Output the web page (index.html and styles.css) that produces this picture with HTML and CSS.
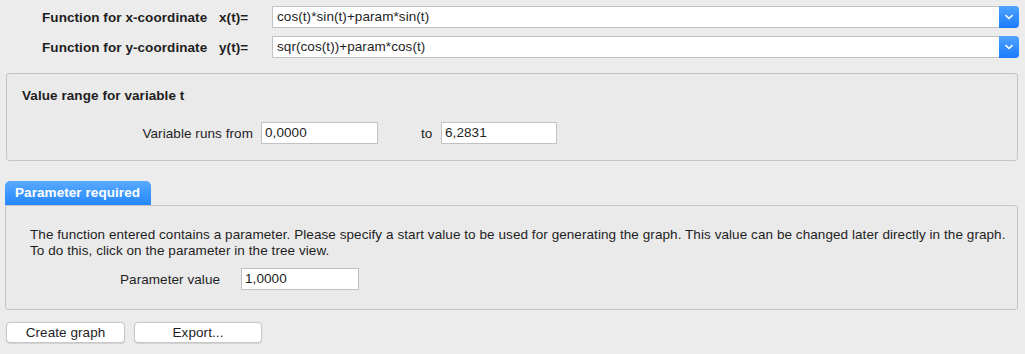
FILE: index.html
```html
<!DOCTYPE html>
<html>
<head><meta charset="utf-8"><link rel="stylesheet" href="styles.css"></head>
<body>
<div class="app">
  <div class="fnrow">
    <span class="fnlabel">Function for x-coordinate</span>
    <span class="fnvar">x(t)=</span>
    <div class="combo"><span class="combotext">cos(t)*sin(t)+param*sin(t)</span><span class="combobtn"><svg width="10" height="6" viewBox="0 0 10 6"><path d="M1.5 1.2 L5 4.5 L8.5 1.2" fill="none" stroke="#fff" stroke-width="1.6"/></svg></span></div>
  </div>
  <div class="fnrow">
    <span class="fnlabel">Function for y-coordinate</span>
    <span class="fnvar">y(t)=</span>
    <div class="combo"><span class="combotext">sqr(cos(t))+param*cos(t)</span><span class="combobtn"><svg width="10" height="6" viewBox="0 0 10 6"><path d="M1.5 1.2 L5 4.5 L8.5 1.2" fill="none" stroke="#fff" stroke-width="1.6"/></svg></span></div>
  </div>

  <div class="panel range">
    <div class="paneltitle">Value range for variable t</div>
    <div class="rangerow">
      <span class="lbl-from">Variable runs from</span>
      <div class="field f-from">0,0000</div>
      <span class="lbl-to">to</span>
      <div class="field f-to">6,2831</div>
    </div>
  </div>

  <div class="tabwrap">
    <div class="tab">Parameter required</div>
    <div class="panel param">
      <p class="desc"><span class="line">The function entered contains a parameter. Please specify a start value to be used for generating the graph. This value can be changed later directly in the graph.</span><br>To do this, click on the parameter in the tree view.</p>
      <div class="paramrow">
        <span class="lbl-param">Parameter value</span>
        <div class="field f-param">1,0000</div>
      </div>
    </div>
  </div>

  <div class="buttons">
    <button class="btn b-create">Create graph</button>
    <button class="btn b-export">Export...</button>
  </div>
</div>
</body>
</html>
```
FILE: styles.css
```css
* { box-sizing: border-box; }
html, body { margin: 0; padding: 0; background: #ececec; }
body {
  font-family: "Liberation Sans", Arial, sans-serif;
  font-size: 13.5px;
  letter-spacing: 0.07px;
  color: #1e1e1e;
  width: 1025px;
  height: 354px;
  overflow: hidden;
}
.app { padding: 6px 6px 0 5px; }
.fnrow {
  display: flex;
  align-items: center;
  height: 22px;
  margin-bottom: 8px;
}
.fnlabel { font-weight: bold; margin-left: 37px; width: 177px; white-space: nowrap; }
.fnvar { font-weight: bold; width: 53px; }
.combo {
  flex: 1;
  display: flex;
  height: 22px;
  background: #fff;
  border: 1px solid #c2c2c2;
  border-right: none;
  border-radius: 0 4px 4px 0;
}
.combotext { flex: 1; padding: 2px 0 0 4px; white-space: nowrap; }
.combobtn {
  width: 20px;
  height: 22px;
  margin-top: -1px;
  background: linear-gradient(#4fa3ff, #1a7bfb);
  border-radius: 0 4px 4px 0;
  display: flex;
  align-items: center;
  justify-content: center;
}
.panel {
  border: 1px solid #c4c4c4;
  border-radius: 3px;
  background: #eaeaea;
}
.range {
  margin: 15px 1px 0 1px;
  height: 88px;
  padding: 14px 0 0 15px;
}
.paneltitle { font-weight: bold; }
.rangerow { display: flex; align-items: center; margin-top: 19px; }
.lbl-from { width: 231px; text-align: right; margin-right: 8px; }
.field {
  background: #fff;
  border: 1px solid #c2c2c2;
  height: 22px;
  padding: 2px 0 0 3px;
}
.f-from { width: 117px; }
.lbl-to { margin-left: 43px; width: 20px; }
.f-to { width: 116px; }
.tabwrap { margin-top: 20px; }
.tab {
  display: inline-block;
  width: 146px;
  height: 24px;
  padding: 4px 0 0 10px;
  background: linear-gradient(#5aaaff, #2387fc);
  border-radius: 5px 5px 0 0;
  color: #fff;
  font-weight: bold;
  vertical-align: bottom;
}
.param {
  height: 105px;
  margin-right: 1px;
  padding: 0 0 0 24px;
  border-top-left-radius: 0;
}
.desc { margin: 21px 0 0 0; line-height: 16px; }
.line { white-space: nowrap; }
.paramrow { display: flex; align-items: center; margin-top: 9px; }
.lbl-param { margin-left: 90px; width: 121px; }
.f-param { width: 118px; }
.buttons { display: flex; gap: 9px; margin-top: 12px; margin-left: 1px; }
.btn {
  font-family: inherit;
  font-size: 13.5px;
  letter-spacing: 0.07px;
  color: #1e1e1e;
  background: #fff;
  border: 1px solid #c8c8c8;
  border-radius: 4px;
  height: 21px;
  padding: 0;
  box-shadow: 0 0.5px 1px rgba(0,0,0,0.12);
}
.b-create { width: 119px; }
.b-export { width: 128px; }
```
